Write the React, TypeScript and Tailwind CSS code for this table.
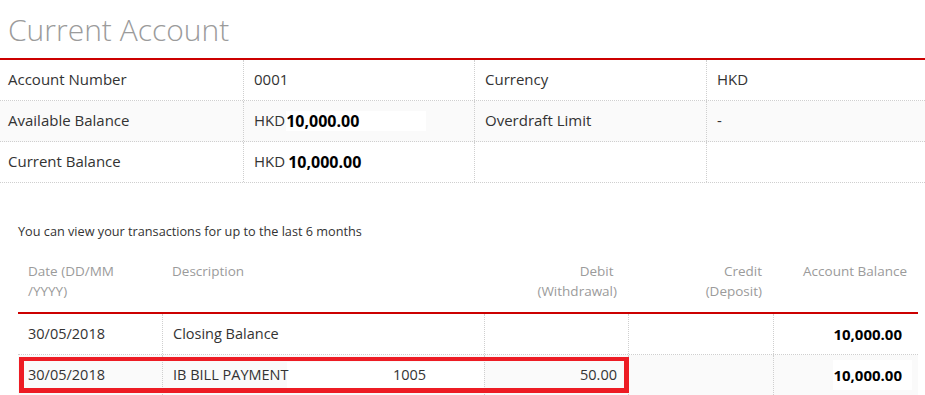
const font = { fontFamily: '"Open Sans", "Noto Sans", sans-serif' };

type InfoRow = { label: string; value: React.ReactNode; label2: string; value2: string; shaded?: boolean };

const infoRows: InfoRow[] = [
  { label: "Account Number", value: "0001", label2: "Currency", value2: "HKD" },
  {
    label: "Available Balance",
    value: (
      <>
        HKD
        <span className="ml-[1px] inline-block h-[20px] w-[140px] bg-white text-[16px] font-bold leading-[20px] text-black">
          10,000.00
        </span>
      </>
    ),
    label2: "Overdraft Limit",
    value2: "-",
    shaded: true,
  },
  {
    label: "Current Balance",
    value: (
      <>
        HKD
        <span className="ml-[3px] text-[16px] font-bold text-black">10,000.00</span>
      </>
    ),
    label2: "",
    value2: "",
  },
];

function AccountInfo() {
  return (
    <div className="border-t-2 border-[#cc0000]">
      {infoRows.map((r, i) => (
        <div
          key={i}
          className={`grid h-[41px] grid-cols-[243px_231px_232px_1fr] border-b border-dotted border-[#cfcfcf] text-[15px] text-[#333] ${
            r.shaded ? "bg-[#fafafa]" : "bg-white"
          }`}
        >
          <div className="flex items-center pl-2 pb-[1px]">{r.label}</div>
          <div className="flex items-center border-l border-dotted border-[#cfcfcf] pl-[10px] pb-[1px]">{r.value}</div>
          <div className="flex items-center border-l border-dotted border-[#cfcfcf] pl-[10px] pb-[1px]">{r.label2}</div>
          <div className="flex items-center border-l border-dotted border-[#cfcfcf] pl-[10px] pb-[1px]">{r.value2}</div>
        </div>
      ))}
    </div>
  );
}

const cols = "grid grid-cols-[144px_322px_144px_145px_145px]";

function Transactions() {
  return (
    <div className="pl-[18px] pr-[7px]">
      <p className="mt-[38px] text-[12.7px] leading-[20px] text-[#333]">
        You can view your transactions for up to the last 6 months
      </p>
      <div className={`${cols} mt-[20px] pb-[11px] text-[13.5px] leading-[20px] text-[#9b9b9b]`}>
        <div className="pl-[10px]">
          Date (DD/MM
          <br />
          /YYYY)
        </div>
        <div className="pl-[10px]">Description</div>
        <div className="pr-[11px] text-right">
          Debit&nbsp;
          <br />
          (Withdrawal)
        </div>
        <div className="pr-[11px] text-right">
          Credit
          <br />
          (Deposit)
        </div>
        <div className="pr-[11px] text-right">Account Balance</div>
      </div>
      <div className="border-t-2 border-[#cc0000] text-[14.5px] text-[#333]">
        <div className={`${cols} h-[41px] border-b border-dotted border-[#cfcfcf] bg-white`}>
          <div className="flex items-center pl-[10px]">30/05/2018</div>
          <div className="flex items-center border-l border-dotted border-[#cfcfcf] pl-[10px]">Closing Balance</div>
          <div className="border-l border-dotted border-[#cfcfcf]" />
          <div className="border-l border-dotted border-[#cfcfcf]" />
          <div className="flex items-center justify-end border-l border-dotted border-[#cfcfcf] pr-[16px] text-[15px] font-bold text-black">
            10,000.00
          </div>
        </div>
        <div className={`${cols} relative h-[40px] bg-[#fafafa]`}>
          <div className="flex items-center pl-[10px]">30/05/2018</div>
          <div className="flex items-center border-l border-dotted border-[#cfcfcf] pl-[10px]">
            <span className="relative z-10 w-[114px] shrink-0 whitespace-nowrap">IB BILL PAYMENT</span>
            <span className="flex h-[27px] flex-1 items-center bg-white pl-[106px]">1005</span>
          </div>
          <div className="flex items-center justify-end border-l border-dotted border-[#cfcfcf] pr-[11px]">50.00</div>
          <div className="border-l border-dotted border-[#cfcfcf]" />
          <div className="flex items-center justify-end border-l border-dotted border-[#cfcfcf] pr-[6px]">
            <span className="inline-block h-[30px] bg-white pr-[10px] text-[15px] font-bold leading-[30px] text-black">
              10,000.00
            </span>
          </div>
          {/* highlight frame around the bill payment entry */}
          <div className="pointer-events-none absolute left-[1px] top-[2px] z-20 h-[36px] w-[610px] border-x-[5px] border-b-[5px] border-t-[4px] border-[#ed1c24]" />
        </div>
      </div>
    </div>
  );
}

export default function App() {
  return (
    <div className="h-[395px] w-[925px] overflow-hidden bg-white" style={font}>
      <h1 className="h-[58px] pl-2 pt-[10px] text-[30px] font-light leading-[40px] text-[#9b9b9b]">Current Account</h1>
      <AccountInfo />
      <Transactions />
    </div>
  );
}
